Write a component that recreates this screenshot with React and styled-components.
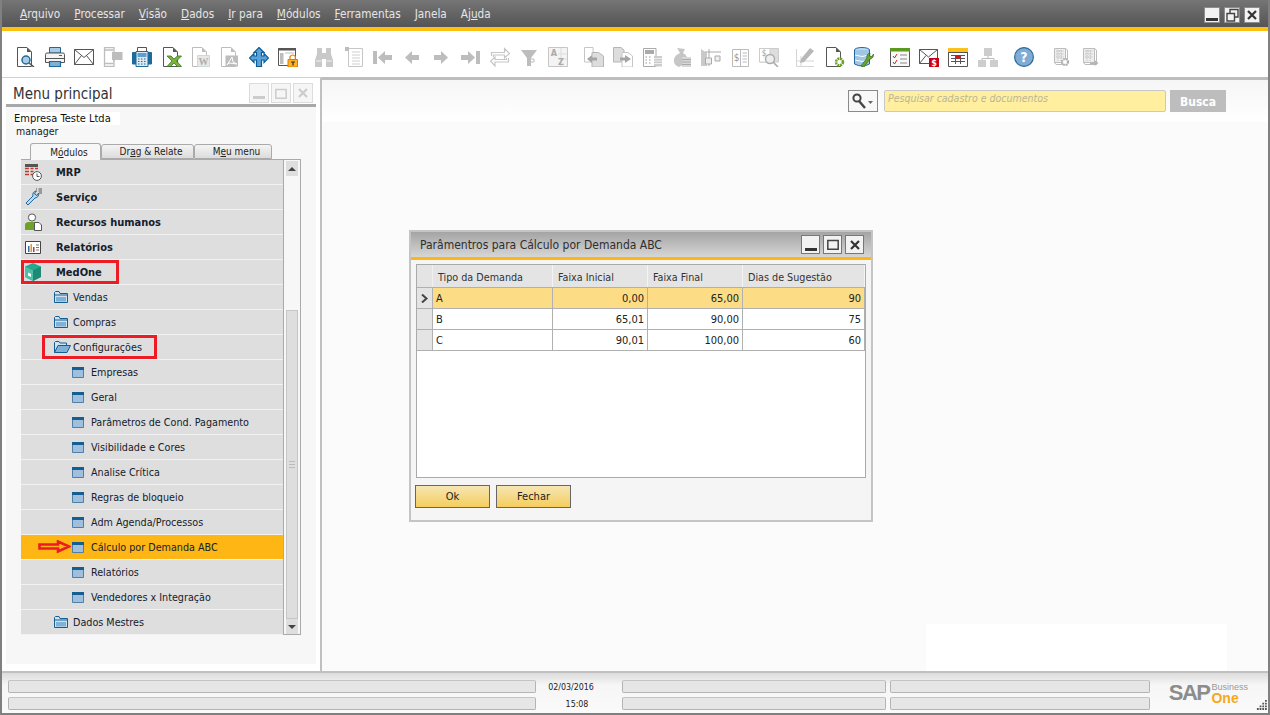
import React from 'react';
import styled, { createGlobalStyle } from 'styled-components';

const GlobalStyle = createGlobalStyle`
    html, body { margin: 0; padding: 0; height: 100%; overflow: hidden; }
    body { font-family: "DejaVu Sans Condensed", "DejaVu Sans", "Noto Sans", sans-serif; font-stretch: condensed; font-size: 11px; color: #1c1c1c; }
    #root { height: 100%; }
    * { box-sizing: border-box; }
`;

// ---------- toolbar icons ----------
const G = '#bdbdbd';
const D = '#555';
const B = '#1f6a9c';

const Svg = ({ children, w = 20, h = 20 }) => (
    <svg width={w} height={h} viewBox={`0 0 ${w} ${h}`} fill="none">{children}</svg>
);
const Doc = ({ c = D, fold = '#555' }) => (
    <>
        <path d="M1.5.5H11L15.5 5V19.5H1.5Z" stroke={c} fill="#fff" />
        <path d="M11 .5L15.5 5H11Z" fill={fold} />
    </>
);
const GridBox = ({ c = G }) => (
    <>
        <path d="M4.5 1.5H15.5V15.5H4.5Z" stroke={c} fill="#eee" />
        <path d="M15.5 1.5L17.5 3V17.5H6L4.5 15.5" stroke={c} />
        <path d="M6 4H14M6 7H14M6 10H14M8 3V14M11 3V14" stroke={c} strokeDasharray="1.5 1" />
    </>
);

const icons = [
    [
        <Svg><Doc /><circle cx="10" cy="13" r="4" stroke={B} strokeWidth="1.5" fill="#a9cbe6" /><path d="M13 16L18 20" stroke={D} strokeWidth="1.6" /></Svg>,
        <Svg><path d="M4.5.5H15.5V6H4.5Z" stroke={B} fill="#a9cbe6" /><path d="M.5 7.5Q.5 6 2 6H18Q19.5 6 19.5 7.5V15.5H.5Z" stroke={D} fill="#f4f4f4" /><path d="M1 11.5H19" stroke={D} /><path d="M4.5 14.5H15.5V19.5H4.5Z" stroke={B} strokeWidth="1.2" fill="#7fb0d6" /><path d="M14 8.5H17" stroke="#c33" /></Svg>,
        <Svg h={16}><path d="M.5.5H19.5V15.5H.5Z" stroke={D} fill="#fff" /><path d="M.5.5L10 8.5L19.5.5M.5 15.5L7.5 6.5M19.5 15.5L12.5 6.5" stroke={D} /></Svg>,
        <Svg><path d="M1.5.5H11V19.5H1.5Z" stroke={G} strokeWidth="1.3" fill="#fff" /><path d="M2 3H10.5M2 16.5H10.5" stroke={G} strokeWidth="1.5" /><path d="M9 5H19.5V13H12L10 15.5V13H9Z" fill={G} /></Svg>,
        <Svg><path d="M5.5.5H14.5V5H5.5Z" stroke={D} fill="#fff" /><path d="M.5 5.5H4V17H.5ZM16 5.5H19.5V17H16Z" fill={B} stroke={B} /><path d="M4 4.5H16V19.5H4Z" stroke={B} fill="#dfe9f2" /><path d="M5.5 6H14.5V10H5.5Z" fill="#5f9fcf" /><path d="M6 12H7.5M9 12H10.5M12 12H13.5M6 14.5H7.5M9 14.5H10.5M12 14.5H13.5M6 17H7.5M9 17H10.5M12 17H13.5" stroke={B} strokeWidth="1.2" /></Svg>,
        <Svg><Doc /><path d="M5 9H9L12 12L15.5 9H19.5L14.5 14L19.5 19.5H15.5L12 16L8.5 19.5H5L10 14Z" fill="#7fb23a" stroke="#2f7a1e" strokeWidth=".8" /></Svg>,
        <Svg><Doc c={G} fold={G} /><path d="M6.5 8.5H18.5V19.5H6.5Z" stroke="#cfd9cf" fill="#e8e8e8" /><text x="12.5" y="17.5" fontFamily="Liberation Serif" fontSize="10" fontWeight="700" textAnchor="middle" fill="#adadad">W</text></Svg>,
        <Svg><Doc c={G} fold={G} /><path d="M5.5 8.5H18V19.5H5.5Z" fill={G} /><path d="M7 18L12 10L13 15L17 17L9 16Z" stroke="#fff" /></Svg>,
        <Svg><path d="M10 .5L15 5.5H12.5V9H15V6.5L19.5 11L15 15.5V13H12.5V19.5H7.5V13H5V15.5L.5 11L5 6.5V9H7.5V5.5H5Z" stroke="#0f5a94" strokeWidth="1.2" fill="#58a5dc" /></Svg>,
        <Svg><path d="M.5 1.5H17.5V18.5H.5Z" stroke={D} fill="#fff" /><path d="M.5 1H18V3.5H.5Z" fill={D} /><path d="M2 6H5.5V17H2Z" fill={G} /><path d="M7 6H16" stroke={G} /><path d="M10 12.5H19.5V20H10Z" fill="#fbb324" stroke="#e07c00" /><path d="M12 12V9.5Q14.7 6.5 17.4 9.5V12" stroke="#e07c00" strokeWidth="1.2" /><path d="M13 15H17M15 15V18.5" stroke="#333" strokeWidth="1.2" /></Svg>,
    ],
    [
        <Svg w={18}><path d="M2 1H7V6H11V1H16V7L18 13V20H11V12H7V20H0V13L2 7Z" fill="#c9c9c9" /><path d="M1 14H6.5M11.5 14H17" stroke="#f0f0f0" /></Svg>,
        <Svg w={18}><path d="M3.5 1.5H17.5V19.5H3.5Z" stroke="#c6c6c6" fill="#fff" /><path d="M0 0H4V4H0Z" fill={G} /><path d="M7 5H15M7 8H15M7 11H15M7 14H15M7 17H15" stroke="#cfcfcf" /></Svg>,
        <Svg><path d="M0 4H4V17H0Z" fill={G} /><path d="M5 10.5L12 4V8H19V13H12V17Z" fill={G} /></Svg>,
        <Svg w={14}><path d="M0 10.5L7 4V8H14V13H7V17Z" fill={G} /></Svg>,
        <Svg w={14}><path d="M14 10.5L7 4V8H0V13H7V17Z" fill={G} /></Svg>,
        <Svg><path d="M16 4H20V17H16Z" fill={G} /><path d="M15 10.5L8 4V8H1V13H8V17Z" fill={G} /></Svg>,
        <Svg><path d="M1.5 9V5.5H14.5V1.5L19.5 6.5L14.5 11V8H3.5V10M18.5 11V15H5V19L.5 14L5 10V12.5H16.5V11" stroke="#c6c6c6" strokeWidth="1.2" fill="#fff" /></Svg>,
        <Svg w={16}><path d="M0 3H16L10 11V19L6 19V11Z" fill={G} /><path d="M10 12H13V15H10" stroke={G} /></Svg>,
        <Svg><path d="M.5 .5H19.5V19.5H.5Z" stroke="#c6c6c6" fill="#f4f4f4" /><path d="M10 7H19M10 12H19M13 1V19" stroke="#ddd" /><text x="6" y="9" fontSize="9" fontWeight="700" textAnchor="middle" fill="#aaa">A</text><text x="13" y="18" fontSize="9" fontWeight="700" textAnchor="middle" fill="#aaa">Z</text></Svg>,
    ],
    [
        <Svg><path d="M.5.5H9L9.5 15H.5Z" stroke="#c6c6c6" fill="#fff" /><path d="M8 5.5H14.5L19.5 9V20H8Z" fill="#ddd" stroke="#b5b5b5" /><path d="M3 12L8 8V10.5H13V13.5H8V16Z" fill="#a5a5a5" /></Svg>,
        <Svg><path d="M.5.5H8L11 3V15H.5Z" fill="#ddd" stroke="#b5b5b5" /><path d="M9 5.5H15L19.5 9V20H9Z" stroke="#c6c6c6" fill="#fff" /><path d="M18 12L12 8V10.5H7V13.5H12V16Z" fill="#a5a5a5" /></Svg>,
        <Svg><path d="M.5 1.5H13V19.5H.5Z" stroke="#aaa" fill="#fff" /><path d="M2 3H11V7H2Z" fill="#aaa" /><path d="M2.5 10H4M6 10H7.5M2.5 13H4M6 13H7.5M2.5 16H4M6 16H7.5" stroke="#999" /><path d="M11 9H19V19.5H11Z" fill="#ccc" /><path d="M11 11.5H19M11 14H19M11 16.5H19" stroke="#eee" /></Svg>,
        <Svg w={18}><path d="M4 1L12 2L10 6Q16 9 14 16L6 20Q0 18 1 12Q2 8 7 6Z" fill="#c6c6c6" /><path d="M9 10H18V20H9Z" fill="#d8d8d8" /><path d="M9 12.5H18M9 15H18M9 17.5H18" stroke="#aaa" /></Svg>,
        <Svg><path d="M0 2L6 6V19H0Z" fill="#c9c9c9" /><path d="M4 5H20M8 2V19" stroke="#aaa" /><path d="M4.5 11H10.5V17H4.5Z" stroke="#aaa" fill="#eee" /><path d="M14 9H19V14H14Z" stroke="#aaa" fill="#eee" /></Svg>,
        <Svg><path d="M2.5 2.5H18.5V19.5H2.5Z" stroke="#bbb" fill="#fff" /><path d="M10.5 2V20" stroke="#bbb" /><text x="6.5" y="14" fontSize="10" textAnchor="middle" fill="#999">$</text><path d="M12.5 6H17M12.5 9H17M12.5 12H17M12.5 15H17" stroke="#bbb" /></Svg>,
        <Svg><path d="M.5 1.5H19.5V15H.5Z" fill="#ddd" stroke="#ccc" /><path d="M.5 1.5H11V15H.5Z" fill="#fff" stroke="#ccc" /><circle cx="11" cy="12" r="4.5" stroke="#aaa" strokeWidth="1.4" fill="#eee" /><path d="M14 15L19 20" stroke="#aaa" strokeWidth="1.6" /><text x="5" y="9" fontSize="8" textAnchor="middle" fill="#999">$</text></Svg>,
    ],
    [
        <Svg w={18}><path d="M.5 2V19.5H18M.5 14H18M5 9V20" stroke="#d5d5d5" /><path d="M5 12L14 1L18 4L8 15L4 16Z" fill="#b8b8b8" /></Svg>,
        <Svg><Doc /><circle cx="14.5" cy="15" r="3.4" stroke="#6ea22a" strokeWidth="2.6" strokeDasharray="2 .7" fill="#fff" /></Svg>,
        <Svg><ellipse cx="8" cy="3" rx="7.5" ry="2.5" fill="#bcd9ef" stroke={B} /><path d="M.5 3V17Q8 21 15.5 17V3" fill="#9fc6e6" stroke={B} /><path d="M1 8Q8 11 15 8M1 13Q8 16 15 13" stroke="#fff" /><path d="M7 19L13 11Q12 7 16 6L15.5 9L18 9.5L19.5 7Q20 11 15.5 12.5L10 20Z" fill="#6ea22a" stroke="#2f6a12" strokeWidth=".7" /></Svg>,
    ],
    [
        <Svg><path d="M.5 1.5H19.5V19.5H.5Z" stroke={D} fill="#f8f8f8" /><path d="M0 1H20V4.5H0Z" fill="#5b9a1f" /><path d="M3 9L4.5 11L7 7M3 15L4.5 17L7 13" stroke="#c22" /><path d="M10 8H17M10 12H17M10 16H17" stroke="#888" strokeWidth="1.2" /></Svg>,
        <Svg><path d="M.5 2.5H18.5V16.5H.5Z" stroke={D} fill="#fff" /><path d="M.5 2.5L9.5 10L18.5 2.5M.5 16.5L7 8.5" stroke={D} /><path d="M10 11H20V20H10Z" fill="#c9001a" /><text x="15" y="18.5" fontSize="9" fontWeight="700" textAnchor="middle" fill="#fff">$</text></Svg>,
        <Svg><path d="M.5 1.5H19.5V19.5H.5Z" stroke={D} fill="#fff" /><path d="M0 1H20V5H0Z" fill="#fcc21b" /><path d="M1 5.5H19" stroke={D} /><path d="M3 8.5H17M3 11.5H17M3 14.5H17M7.5 8V17M12.5 8V17" stroke={D} /><path d="M7.5 8.5H12.5V11.5H7.5Z" fill="#d11" /></Svg>,
        <Svg><path d="M6 1H14V9H6ZM0 13H8V20H0ZM12 13H20V20H12Z" fill="#cdcdcd" /><path d="M10 9V11.5H4V13M10 11.5H16V13" stroke="#bbb" /></Svg>,
    ],
    [
        <Svg><circle cx="10" cy="10" r="9.4" fill="#7fabd4" stroke="#2a6c9c" strokeWidth="1.2" /><text x="10" y="15" fontSize="14" fontWeight="700" textAnchor="middle" fill="#fff">?</text></Svg>,
    ],
    [
        <Svg><GridBox /><circle cx="15" cy="15" r="3" stroke="#aaa" strokeWidth="2.2" strokeDasharray="1.6 .8" fill="#fff" /></Svg>,
        <Svg><GridBox /><path d="M11 15.5H15.5V13L19.5 16L15.5 19V17.5H11Z" fill="#b5b5b5" /></Svg>,
    ],
];

// ---------- tree icons ----------
const WinIcon = () => (
    <svg width="12" height="11" viewBox="0 0 12 11">
        <path d="M.5.5H11.5V10.5H.5Z" fill="#9fbfdd" stroke="#4f7fa8" />
        <path d="M0 0H12V3H0Z" fill="#145e91" />
    </svg>
);
const FolderIcon = () => (
    <svg width="14" height="12" viewBox="0 0 14 12">
        <path d="M.5 1.5V11.5H13.5V2.5H6L5 .5H1.5Z" fill="#cfe2f2" stroke="#145e91" />
        <path d="M1 4H13" stroke="#145e91" />
        <path d="M2 6H12V10.5H2Z" fill="#7fb0d6" />
    </svg>
);
const OpenFolderIcon = () => (
    <svg width="17" height="12" viewBox="0 0 17 12">
        <path d="M.5 11.5V1.5L1.5.5H5L6 2H12.5V4" fill="#cfe2f2" stroke="#145e91" />
        <path d="M.5 11.5L4 4.5H16.5L13 11.5Z" fill="#7fb0d6" stroke="#145e91" />
    </svg>
);
const MrpIcon = () => (
    <svg width="17" height="17" viewBox="0 0 17 17">
        <path d="M0 0H13V3H0Z" fill="#555" />
        <path d="M0 4.5H4M5.5 4.5H8.5M10 4.5H13M0 7.5H4M5.5 7.5H8.5M0 10.5H4M5.5 10.5H8.5" stroke="#c0392b" strokeWidth="1.6" />
        <circle cx="12" cy="12" r="4.4" fill="#fff" stroke="#555" />
        <path d="M12 9.5V12.5H14.5" stroke="#555" fill="none" />
    </svg>
);
const ServiceIcon = () => (
    <svg width="17" height="18" viewBox="0 0 17 18">
        <path d="M1 15L8 8Q7 4 11 3L9.5 6L12 7.5L13.5 5Q14.5 9 10 10L3 17Z" fill="#bcd9ef" stroke="#1f6a9c" />
        <path d="M11 1H12M13.5 1H17M11 3H12M13.5 3H17M14 5H17" stroke="#555" />
    </svg>
);
const HrIcon = () => (
    <svg width="17" height="18" viewBox="0 0 17 18">
        <circle cx="7" cy="4.5" r="3.6" fill="#fff" stroke="#555" />
        <path d="M0 17V12Q0 9 4 9H10V17Z" fill="#6ea22a" />
        <path d="M9.5 9.5H14L16.5 12V17.5H9.5Z" fill="#fff" stroke="#555" />
    </svg>
);
const ReportIcon = () => (
    <svg width="16" height="13" viewBox="0 0 16 13">
        <path d="M.5.5H15.5V12.5H.5Z" fill="#fff" stroke="#444" />
        <path d="M3 5H4.5V11H3Z" fill="#2f6fa8" />
        <path d="M5.5 3H7V11H5.5Z" fill="#e8962a" />
        <path d="M8 6H9.5V11H8Z" fill="#c0392b" />
        <path d="M11 4H14M11 6.5H14M11 9H14" stroke="#777" />
    </svg>
);
const CubeIcon = () => (
    <svg width="16" height="18" viewBox="0 0 16 18">
        <path d="M8 0L16 3.5V14L8 18L0 14V3.5Z" fill="#28a88f" />
        <path d="M8 7.5L16 3.5V14L8 18Z" fill="#1e8a75" />
        <path d="M0 3.5L8 7.5V18L0 14Z" fill="#4fc0a8" />
        <path d="M3 9.5L6 11V14L3 12.5Z" fill="#fff" />
    </svg>
);
const ArrowMark = () => (
    <svg width="33" height="13" viewBox="0 0 33 13" fill="none">
        <path d="M1.5 4.5H20V1.5L31 6.5L20 11.5V8.5H1.5Z" stroke="#ed1c24" strokeWidth="2.6" fill="#ffb612" />
    </svg>
);

// ---------- data ----------
const menu = [
    ['Arquivo', 0], ['Processar', 0], ['Visão', 0], ['Dados', 0], ['Ir para', 0],
    ['Módulos', 0], ['Ferramentas', 0], ['Janela', 0], ['Ajuda', 2],
];

const tree = [
    { label: 'MRP', level: 0, icon: <MrpIcon /> },
    { label: 'Serviço', level: 0, icon: <ServiceIcon /> },
    { label: 'Recursos humanos', level: 0, icon: <HrIcon /> },
    { label: 'Relatórios', level: 0, icon: <ReportIcon /> },
    { label: 'MedOne', level: 0, icon: <CubeIcon />, mark: { left: 0, width: 98 } },
    { label: 'Vendas', level: 1, icon: <FolderIcon /> },
    { label: 'Compras', level: 1, icon: <FolderIcon /> },
    { label: 'Configurações', level: 1, icon: <OpenFolderIcon />, mark: { left: 21, width: 115 } },
    { label: 'Empresas', level: 2, icon: <WinIcon /> },
    { label: 'Geral', level: 2, icon: <WinIcon /> },
    { label: 'Parâmetros de Cond. Pagamento', level: 2, icon: <WinIcon /> },
    { label: 'Visibilidade e Cores', level: 2, icon: <WinIcon /> },
    { label: 'Analise Crítica', level: 2, icon: <WinIcon /> },
    { label: 'Regras de bloqueio', level: 2, icon: <WinIcon /> },
    { label: 'Adm Agenda/Processos', level: 2, icon: <WinIcon /> },
    { label: 'Cálculo por Demanda ABC', level: 2, icon: <WinIcon />, active: true },
    { label: 'Relatórios', level: 2, icon: <WinIcon /> },
    { label: 'Vendedores x Integração', level: 2, icon: <WinIcon /> },
    { label: 'Dados Mestres', level: 1, icon: <FolderIcon /> },
];

const demandRows = [
    ['A', '0,00', '65,00', '90'],
    ['B', '65,01', '90,00', '75'],
    ['C', '90,01', '100,00', '60'],
];

const underline = (text, i) => (
    <>
        {text.slice(0, i)}
        <u>{text[i]}</u>
        {text.slice(i + 1)}
    </>
);

const GlyphMin = ({ c = '#333' }) => (
    <svg width="12" height="12" viewBox="0 0 12 12"><path d="M0 9H12V12H0Z" fill={c} /></svg>
);
const GlyphRestore = () => (
    <svg width="13" height="14" viewBox="0 0 13 14" fill="none"><path d="M1 5.5H8.5V13H1ZM4 5V1.5H12V9H9" stroke="#444" strokeWidth="1.4" /></svg>
);
const GlyphMax = ({ c = '#444' }) => (
    <svg width="12" height="11" viewBox="0 0 12 11" fill="none"><path d="M.8 1.5H11.2V10.2H.8Z" stroke={c} strokeWidth="1.5" /></svg>
);
const GlyphClose = ({ c = '#333' }) => (
    <svg width="10" height="10" viewBox="0 0 10 10" fill="none"><path d="M1 1L9 9M9 1L1 9" stroke={c} strokeWidth="2.2" /></svg>
);

export default function App() {
    return (
        <Frame>
            <GlobalStyle />
            <TitleBar>
                <MenuBar>
                    {menu.map(([name, idx]) => (
                        <MenuItem key={name}>{underline(name, idx)}</MenuItem>
                    ))}
                </MenuBar>
                <TitleButtons>
                    <TitleButton><GlyphMin /></TitleButton>
                    <TitleButton><GlyphRestore /></TitleButton>
                    <TitleButton><GlyphClose /></TitleButton>
                </TitleButtons>
            </TitleBar>
            <AccentBar />
            <Toolbar>
                {icons.map((group, g) => (
                    <ToolGroup key={g}>
                        {group.map((icon, i) => (
                            <ToolSlot key={i}>{icon}</ToolSlot>
                        ))}
                    </ToolGroup>
                ))}
            </Toolbar>

            <Body>
                <Sidebar>
                    <SideHead>
                        <SideTitle>Menu principal</SideTitle>
                        <SideButtons>
                            <SideButton><GlyphMin c="#ccc" /></SideButton>
                            <SideButton><GlyphMax c="#ccc" /></SideButton>
                            <SideButton><GlyphClose c="#ccc" /></SideButton>
                        </SideButtons>
                    </SideHead>
                    <SideContent>
                        <Company>Empresa Teste Ltda</Company>
                        <UserName>manager</UserName>
                        <Tabs>
                            <Tab $active $width={71}>{underline('Módulos', 1)}</Tab>
                            <Tab $width={93}>{underline('Drag & Relate', 2)}</Tab>
                            <Tab $width={78}>{underline('Meu menu', 1)}</Tab>
                        </Tabs>
                        <TreeWrap>
                            <TreeList>
                                {tree.map(item => (
                                    <TreeRow key={item.label + item.level} $level={item.level} $active={item.active}>
                                        {item.active && <RowArrow><ArrowMark /></RowArrow>}
                                        <TreeIcon $level={item.level}>{item.icon}</TreeIcon>
                                        <TreeLabel $level={item.level}>{item.label}</TreeLabel>
                                        {item.mark && <RedBox $left={item.mark.left} $width={item.mark.width} />}
                                    </TreeRow>
                                ))}
                            </TreeList>
                            <ScrollBar>
                                <ScrollEnd><UpArrow /></ScrollEnd>
                                <ScrollThumb>
                                    <Grip />
                                </ScrollThumb>
                                <ScrollEnd><DownArrow /></ScrollEnd>
                            </ScrollBar>
                        </TreeWrap>
                    </SideContent>
                </Sidebar>

                <Workspace>
                    <SearchBand>
                        <SearchButton>
                            <svg width="22" height="16" viewBox="0 0 22 16" fill="none">
                                <circle cx="5" cy="5" r="3.6" stroke="#444" strokeWidth="2" />
                                <path d="M7 8L13 15" stroke="#444" strokeWidth="2.4" />
                                <path d="M16 8H21L18.5 11Z" fill="#666" />
                            </svg>
                        </SearchButton>
                        <SearchInput>Pesquisar cadastro e documentos</SearchInput>
                        <SearchGo>Busca</SearchGo>
                    </SearchBand>
                    <BlankPatch />

                    <Dialog>
                        <DialogTitle>
                            <DialogCaption>Parâmentros para Cálculo por Demanda ABC</DialogCaption>
                            <DialogButtons>
                                <DialogButton><GlyphMin /></DialogButton>
                                <DialogButton><GlyphMax /></DialogButton>
                                <DialogButton><GlyphClose /></DialogButton>
                            </DialogButtons>
                        </DialogTitle>
                        <DialogAccent />
                        <DataGrid>
                            <GridRow $head>
                                <RowHead $head />
                                <HeadCell>Tipo da Demanda</HeadCell>
                                <HeadCell>Faixa Inicial</HeadCell>
                                <HeadCell>Faixa Final</HeadCell>
                                <HeadCell>Dias de Sugestão</HeadCell>
                            </GridRow>
                            {demandRows.map((row, i) => (
                                <GridRow key={row[0]} $selected={i === 0}>
                                    <RowHead>
                                        {i === 0 && (
                                            <svg width="7" height="9" viewBox="0 0 7 9" fill="none">
                                                <path d="M1 .5L5.5 4.5L1 8.5" stroke="#444" strokeWidth="2" />
                                            </svg>
                                        )}
                                    </RowHead>
                                    {row.map((value, c) => (
                                        <Cell key={c} $right={c > 0}>{value}</Cell>
                                    ))}
                                </GridRow>
                            ))}
                        </DataGrid>
                        <DialogActions>
                            <ActionButton>Ok</ActionButton>
                            <ActionButton>Fechar</ActionButton>
                        </DialogActions>
                    </Dialog>
                </Workspace>
            </Body>

            <StatusBar>
                <StatusGrid>
                    <StatusCell />
                    <StatusText $shift={16}>02/03/2016</StatusText>
                    <StatusCell />
                    <StatusCell />
                    <StatusCell />
                    <StatusText $shift={4}>15:08</StatusText>
                    <StatusCell />
                    <StatusCell />
                </StatusGrid>
                <Logo>
                    <LogoSap>SAP</LogoSap>
                    <LogoRight>
                        <LogoBusiness>Business</LogoBusiness>
                        <LogoOne>One</LogoOne>
                    </LogoRight>
                </Logo>
                <ResizeGrip>
                    <svg width="12" height="12" viewBox="0 0 12 12" fill="#555">
                        <path d="M10 0H12V2H10ZM10 3H12V5H10ZM7 3H9V5H7ZM10 6H12V8H10ZM7 6H9V8H7ZM4 6H6V8H4ZM10 9H12V11H10ZM7 9H9V11H7ZM4 9H6V11H4ZM1 9H3V11H1Z" transform="scale(.9)" />
                    </svg>
                </ResizeGrip>
            </StatusBar>
        </Frame>
    );
}

const Frame = styled.div`
    position: relative;
    width: 1270px;
    height: 715px;
    display: flex;
    flex-direction: column;
    background: #fff;
    border-left: 2px solid #808080;
    border-right: 2px solid #808080;
    border-bottom: 2px solid #808080;
    overflow: hidden;
`;

const TitleBar = styled.div`
    height: 27px;
    flex: none;
    display: flex;
    align-items: center;
    justify-content: space-between;
    padding: 2px 8px 0 18px;
    background: linear-gradient(#757575, #555456);
`;

const MenuBar = styled.div`
    display: flex;
    gap: 14px;
    margin-top: -2px;
`;

const MenuItem = styled.span`
    color: #e6e6e6;
    font-size: 11.7px;
`;

const TitleButtons = styled.div`
    display: flex;
    gap: 4px;
`;

const TitleButton = styled.div`
    width: 16px;
    height: 16px;
    display: flex;
    align-items: center;
    justify-content: center;
    background: #f2f2f2;
    border: 1px solid #8d8d8d;
`;

const AccentBar = styled.div`
    height: 4px;
    flex: none;
    background: #fec010;
`;

const Toolbar = styled.div`
    height: 46px;
    flex: none;
    display: flex;
    align-items: center;
    gap: 7px;
    padding: 6px 0 0 9px;
    background: #fff;
`;

const ToolGroup = styled.div`
    display: flex;
`;

const ToolSlot = styled.div`
    width: 29.2px;
    height: 22px;
    display: flex;
    align-items: center;
    justify-content: center;
`;

const Body = styled.div`
    flex: 1;
    min-height: 0;
    display: flex;
`;

const Sidebar = styled.div`
    width: 320px;
    flex: none;
    display: flex;
    flex-direction: column;
    padding: 0 4px 7px 4px;
    border-top: 1px solid #d0d0d0;
    border-right: 2px solid #c0c0c0;
    background: #fff;
`;

const SideHead = styled.div`
    height: 29px;
    flex: none;
    display: flex;
    align-items: flex-end;
    justify-content: space-between;
    padding: 0 3px 1px 7px;
    border-bottom: 3px solid #a8a8a8;
`;

const SideTitle = styled.div`
    font-size: 15px;
    line-height: 17px;
    color: #333;
`;

const SideButtons = styled.div`
    display: flex;
    gap: 2px;
`;

const SideButton = styled.div`
    width: 20px;
    height: 20px;
    display: flex;
    align-items: center;
    justify-content: center;
    background: #f6f6f6;
    border: 1px solid #dcdcdc;
`;

const SideContent = styled.div`
    flex: 1;
    background: #f7f7f7;
    padding: 5px 0 0 15px;
`;

const Company = styled.div`
    width: 106px;
    height: 13px;
    margin-left: -7px;
    background: #fff;
    font-size: 11px;
    line-height: 13px;
    white-space: nowrap;
    color: #111;
`;

const UserName = styled.div`
    height: 18px;
    margin-left: -5px;
    font-size: 10.5px;
    line-height: 12px;
    color: #222;
`;

const Tabs = styled.div`
    display: flex;
    height: 16px;
    margin-left: 9px;
`;

const Tab = styled.div`
    width: ${props => props.$width}px;
    height: ${props => (props.$active ? '17px' : '15px')};
    margin-top: ${props => (props.$active ? '0' : '1px')};
    padding-left: 7px;
    display: flex;
    align-items: center;
    justify-content: center;
    position: relative;
    z-index: ${props => (props.$active ? 1 : 0)};
    font-size: 10px;
    color: #222;
    background: ${props => (props.$active ? '#f7f7f7' : 'linear-gradient(#f4f4f4, #dcdcdc)')};
    border: 1px solid #aaa;
    border-bottom: ${props => (props.$active ? 'none' : '1px solid #aaa')};
    border-radius: 3px 3px 0 0;
`;

const TreeWrap = styled.div`
    display: flex;
    width: 280px;
    height: 476px;
    border-top: 1px solid #aaa;
`;

const TreeList = styled.div`
    width: 262px;
    flex: none;
`;

const TreeRow = styled.div`
    position: relative;
    height: 25px;
    display: flex;
    align-items: center;
    padding-left: ${props => [4, 33, 51][props.$level]}px;
    background: ${props => (props.$active ? '#fdb614' : '#dedede')};
    border-bottom: 1px solid #f2f2f2;
`;

const TreeIcon = styled.div`
    width: ${props => (props.$level === 0 ? 31 : 19)}px;
    flex: none;
    display: flex;
    align-items: center;
`;

const TreeLabel = styled.div`
    font-size: ${props => (props.$level === 0 ? 11 : 10.7)}px;
    font-weight: ${props => (props.$level === 0 ? 700 : 400)};
    color: #14202c;
    white-space: nowrap;
`;

const RedBox = styled.div`
    position: absolute;
    left: ${props => props.$left}px;
    top: 0;
    width: ${props => props.$width}px;
    height: 24px;
    border: 3px solid #ed1c24;
`;

const RowArrow = styled.div`
    position: absolute;
    left: 17px;
    top: 5px;
    display: flex;
`;

const ScrollBar = styled.div`
    width: 18px;
    flex: none;
    display: flex;
    flex-direction: column;
    padding: 1px 2px 0;
    background: #f7f7f7;
    border-left: 1px solid #aaa;
    border-right: 1px solid #aaa;
    border-bottom: 1px solid #aaa;
`;

const ScrollEnd = styled.div`
    height: 15px;
    flex: none;
    display: flex;
    align-items: center;
    justify-content: center;
    background: #dedede;
`;

const UpArrow = styled.div`
    border-left: 4px solid transparent;
    border-right: 4px solid transparent;
    border-bottom: 4px solid #444;
`;

const DownArrow = styled.div`
    border-left: 4px solid transparent;
    border-right: 4px solid transparent;
    border-top: 4px solid #444;
`;

const ScrollThumb = styled.div`
    flex: 1;
    margin-top: 134px;
    display: flex;
    align-items: center;
    justify-content: center;
    background: #dedede;
    border: 1px solid #c6c6c6;
`;

const Grip = styled.div`
    width: 6px;
    height: 8px;
    background: repeating-linear-gradient(#bbb 0 1px, transparent 1px 3px);
`;

const Workspace = styled.div`
    position: relative;
    flex: 1;
    display: flex;
    flex-direction: column;
    background: #fbfbfb;
    border-top: 3px solid #bdbdbd;
`;

const SearchBand = styled.div`
    height: 42px;
    flex: none;
    display: flex;
    justify-content: flex-end;
    gap: 5px;
    padding: 10px 42px 10px 0;
    background: linear-gradient(#f6f6f6, #fff);
`;

const SearchButton = styled.div`
    width: 30px;
    height: 22px;
    margin-right: 1px;
    display: flex;
    align-items: center;
    justify-content: center;
    background: #f8f8f8;
    border: 1px solid #8a8a8a;
`;

const SearchInput = styled.div`
    width: 282px;
    height: 22px;
    padding: 0 3px;
    background: #ffef9e;
    border: 1px solid #c8c8c8;
    border-radius: 2px;
    font-size: 10.5px;
    font-style: italic;
    line-height: 15px;
    color: #b9b69a;
`;

const SearchGo = styled.div`
    width: 56px;
    height: 22px;
    margin-left: -1px;
    padding-top: 1px;
    display: flex;
    align-items: center;
    justify-content: center;
    background: #bdbdbd;
    color: #fff;
    font-size: 12px;
    font-weight: 700;
`;

const BlankPatch = styled.div`
    width: 301px;
    height: 47px;
    margin-top: auto;
    margin-right: 41px;
    align-self: flex-end;
    background: #fff;
`;

const Dialog = styled.div`
    position: absolute;
    left: 87px;
    top: 150px;
    width: 464px;
    height: 292px;
    display: flex;
    flex-direction: column;
    background: #f5f5f5;
    border: 2px solid #c4c4c4;
`;

const DialogTitle = styled.div`
    height: 25px;
    flex: none;
    display: flex;
    align-items: center;
    justify-content: space-between;
    padding: 0 7px 0 9px;
    background: linear-gradient(#a4a4a4, #d6d6d6);
`;

const DialogCaption = styled.div`
    font-size: 12px;
    color: #2e2e2e;
`;

const DialogButtons = styled.div`
    display: flex;
    gap: 3px;
`;

const DialogButton = styled.div`
    width: 19px;
    height: 19px;
    display: flex;
    align-items: center;
    justify-content: center;
    background: #f2f2f2;
    border: 1px solid #777;
`;

const DialogAccent = styled.div`
    height: 3px;
    flex: none;
    background: #fdb614;
`;

const DataGrid = styled.div`
    height: 214px;
    flex: none;
    margin: 4px 5px 0;
    background: #fff;
    border: 1.5px solid #aaa;
`;

const GridRow = styled.div`
    display: grid;
    grid-template-columns: 16px 120px 95px 95px 1fr;
    height: ${props => (props.$head ? '23px' : '21px')};
    background: ${props => (props.$selected ? '#fcdc84' : props.$head ? '#e4e4e4' : '#fff')};
    border-bottom: 1px solid #b0b0b0;
`;

const RowHead = styled.div`
    display: flex;
    align-items: center;
    justify-content: center;
    background: #e4e4e4;
    border-right: 1px solid ${props => (props.$head ? '#f0f0f0' : '#b0b0b0')};
`;

const HeadCell = styled.div`
    display: flex;
    align-items: center;
    padding: 2px 0 0 5px;
    font-size: 10.7px;
    color: #333;
    border-right: 1px solid #f4f4f4;
`;

const Cell = styled.div`
    display: flex;
    align-items: center;
    justify-content: ${props => (props.$right ? 'flex-end' : 'flex-start')};
    padding: 0 3px;
    font-size: 11px;
    color: #222;
    border-right: 1px solid #b0b0b0;
`;

const DialogActions = styled.div`
    display: flex;
    gap: 6px;
    margin-top: 7px;
    padding-left: 4px;
`;

const ActionButton = styled.div`
    width: 75px;
    height: 23px;
    display: flex;
    align-items: center;
    justify-content: center;
    font-size: 11px;
    color: #222;
    background: linear-gradient(#f6e6b4, #f4cd5c);
    border: 1px solid #666;
`;

const StatusBar = styled.div`
    position: relative;
    height: 42px;
    flex: none;
    display: flex;
    justify-content: space-between;
    padding: 7px 0 0 6px;
    background: linear-gradient(#dcdcdc, #f6f6f6 12px, #fafafa);
    border-top: 2px solid #c0c0c0;
`;

const StatusGrid = styled.div`
    display: grid;
    grid-template-columns: 528px 78px 264px 260px;
    column-gap: 4px;
    grid-template-rows: 13px 13px;
    row-gap: 4px;
`;

const StatusCell = styled.div`
    background: #e6e6e6;
    border: 1px solid #b4b4b4;
    border-top-color: #c4c4c4;
    border-radius: 2px;
`;

const StatusText = styled.div`
    display: flex;
    align-items: center;
    justify-content: center;
    padding-right: ${props => props.$shift}px;
    font-size: 8.8px;
    color: #222;
`;

const Logo = styled.div`
    display: flex;
    align-items: center;
    height: 24px;
    margin-top: 1px;
    margin-right: 20px;
    font-family: "Liberation Sans", sans-serif;
`;

const LogoSap = styled.div`
    font-size: 22px;
    font-weight: 700;
    letter-spacing: -1.5px;
    color: #8c8c8c;
`;

const LogoRight = styled.div`
    display: flex;
    flex-direction: column;
    margin-left: 2px;
`;

const LogoBusiness = styled.div`
    font-size: 9px;
    line-height: 10px;
    color: #999;
`;

const LogoOne = styled.div`
    font-size: 14px;
    font-weight: 700;
    line-height: 13px;
    color: #f5a81c;
`;

const ResizeGrip = styled.div`
    position: absolute;
    right: 0;
    bottom: 1px;
    display: flex;
`;
